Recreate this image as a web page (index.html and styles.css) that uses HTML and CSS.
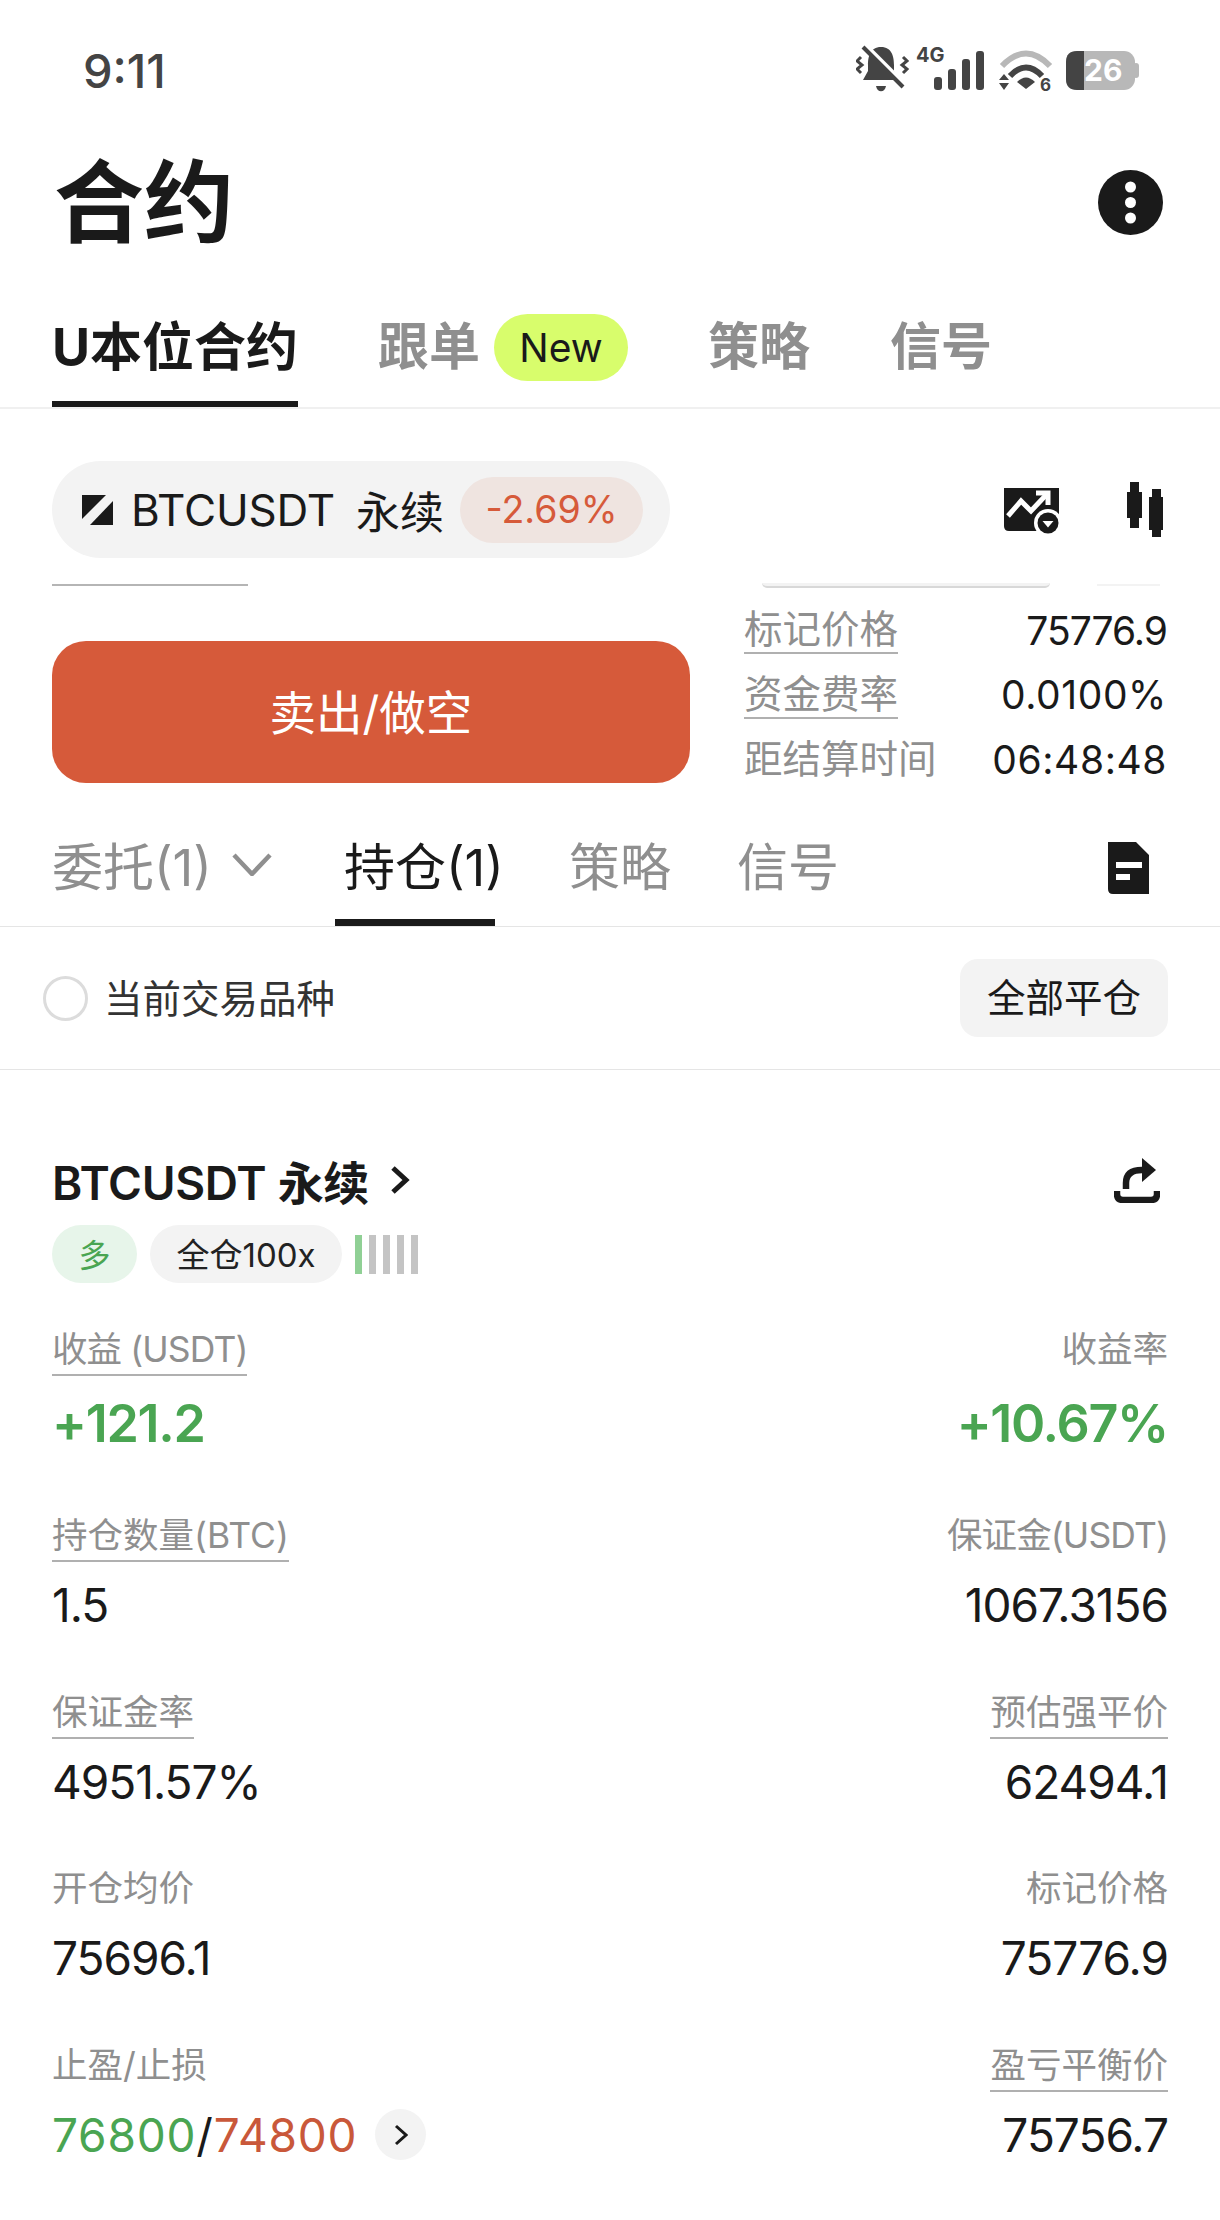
FILE: index.html
```html
<!DOCTYPE html>
<html lang="zh-CN">
<head>
<meta charset="utf-8">
<title>合约</title>
<link rel="stylesheet" href="styles.css">
</head>
<body>
<main class="screen">
  <div class="status">
    <span class="time">9:11</span>
    <svg class="status-icons" viewBox="0 -10 284 67" width="284" height="67">
      <path class="d" d="M25 2C14 2 12 12 12 20V26L7 35H43L38 26V20C38 12 36 2 25 2Z"/>
      <path class="d" d="M20 41H30C29 48 21 48 20 41Z"/>
      <path class="wave" d="M5 12L1 16L6 20L1 24L5 28M47 12L51 16L46 20L51 24L47 28"/>
      <path class="cut" d="M11 2L51 42"/>
      <path class="slash" d="M7 2L47 42"/>
      <text class="s4g" x="60" y="17">4G</text>
      <rect class="d" x="78" y="32" width="8" height="13" rx="3"/>
      <rect class="d" x="92" y="24" width="8" height="21" rx="3"/>
      <rect class="d" x="106" y="14" width="8" height="31" rx="3"/>
      <rect class="d" x="120" y="6" width="8" height="39" rx="3"/>
      <path class="arc-l" d="M146 21Q170 -4 194 21"/>
      <path class="arc-d" d="M154 31Q170 14 186 31"/>
      <path class="d" d="M161 37Q170 28 179 37L170 44Z"/>
      <path class="d" d="M148 29L153 35H143ZM143 38H153L148 45Z"/>
      <text class="s6" x="184" y="46">6</text>
      <rect class="l" x="210" y="6" width="69" height="39" rx="11"/>
      <rect class="l" x="277" y="18" width="6" height="15" rx="3"/>
      <path class="d" d="M228 6H221Q210 6 210 17V34Q210 45 221 45H228Z"/>
      <text class="s26" x="228" y="36">26</text>
    </svg>
  </div>

  <header class="head">
    <h1 class="title">合约</h1>
    <svg class="more" viewBox="0 0 65 65" width="65" height="65">
      <circle class="k" cx="32.5" cy="32.5" r="32.5"/>
      <circle class="w" cx="32.5" cy="17" r="5.5"/>
      <circle class="w" cx="32.5" cy="32.5" r="5.5"/>
      <circle class="w" cx="32.5" cy="48" r="5.5"/>
    </svg>
  </header>

  <nav class="tabs">
    <div class="tab active">U本位合约</div>
    <div class="tab">跟单<span class="new">New</span></div>
    <div class="tab">策略</div>
    <div class="tab">信号</div>
  </nav>

  <section class="instrument">
    <div class="pill">
      <svg class="logo" viewBox="0 0 31 30" width="31" height="30">
        <path class="k" d="M0 0H24L0 24Z"/>
        <path class="k" d="M31 6V30H8Z"/>
      </svg>
      <span class="sym">BTCUSDT</span>
      <span class="perp">永续</span>
      <span class="chg">-2.69%</span>
    </div>
    <svg class="chart-ico" viewBox="0 0 58 49" width="58" height="49">
      <path class="k" d="M0 0H55V38Q55 43 50 43H5Q0 43 0 38Z"/>
      <path class="ws" d="M4 28L17 13L27 23L43 6"/>
      <path class="ws" d="M32 5H44V17"/>
      <circle class="w" cx="44" cy="35" r="14"/>
      <circle class="k" cx="44" cy="35" r="10.5"/>
      <path class="w" d="M38.500 33H49.500L44 39.500Z"/>
    </svg>
    <svg class="candle" viewBox="0 0 36 55" width="36" height="55">
      <path class="k" d="M3 0H12V10H15V36H12V46H3V36H0V10H3Z"/>
      <path class="k" d="M25 7H34V15H36V48H34V55H25V48H22V15H25Z"/>
    </svg>
  </section>

  <div class="clip">
    <span class="clip-a"></span>
    <span class="clip-b"></span>
    <span class="clip-c"></span>
  </div>

  <section class="trade">
    <button class="sell">卖出/做空</button>
    <div class="stats">
      <div class="stat"><span class="stat-k ul">标记价格</span><span class="stat-v">75776.9</span></div>
      <div class="stat"><span class="stat-k ul">资金费率</span><span class="stat-v wide">0.0100%</span></div>
      <div class="stat"><span class="stat-k">距结算时间</span><span class="stat-v wide">06:48:48</span></div>
    </div>
  </section>

  <nav class="subtabs">
    <div class="sub">委托(1)<svg class="chev" viewBox="0 0 40 23" width="40" height="23"><path class="gs" d="M2 2L20 21L38 2"/></svg></div>
    <div class="sub on">持仓(1)</div>
    <div class="sub s3">策略</div>
    <div class="sub s4">信号</div>
    <svg class="doc" viewBox="0 0 41 52" width="41" height="52">
      <path class="k" fill-rule="evenodd" d="M0 0H28L41 13V52H5Q0 52 0 47ZM8 20V26H34V20ZM8 32V38H22V32Z"/>
    </svg>
  </nav>

  <section class="filter">
    <span class="radio"></span>
    <span class="filter-t">当前交易品种</span>
    <button class="closeall">全部平仓</button>
  </section>

  <section class="pos">
    <div class="pos-head">
      <div class="pos-name">BTCUSDT 永续
        <svg class="pos-chev" viewBox="0 0 20 30" width="20" height="30"><path class="ks" d="M3 3L16 15L3 27"/></svg>
      </div>
      <svg class="share" viewBox="0 0 46 45" width="46" height="45">
        <path class="ks6" d="M12 31V25Q12 12 28 12"/>
        <path class="k" d="M28 0L42 12L28 24Z"/>
        <path class="ks6" d="M3 33V36Q3 42 9 42H37Q43 42 43 36V33"/>
      </svg>
    </div>
    <div class="chips">
      <span class="chip long">多</span>
      <span class="chip lev">全仓100x</span>
      <span class="bars"><i class="bar g"></i><i class="bar"></i><i class="bar"></i><i class="bar"></i><i class="bar"></i></span>
    </div>

    <div class="metrics">
      <div class="row hero">
        <div class="m"><span class="lab ul tight">收益 (USDT)</span><div class="val up big">+121.2</div></div>
        <div class="m r"><span class="lab">收益率</span><div class="val up big">+10.67%</div></div>
      </div>
      <div class="row">
        <div class="m"><span class="lab ul">持仓数量(BTC)</span><div class="val">1.5</div></div>
        <div class="m r"><span class="lab tight">保证金(USDT)</span><div class="val">1067.3156</div></div>
      </div>
      <div class="row">
        <div class="m"><span class="lab ul">保证金率</span><div class="val">4951.57%</div></div>
        <div class="m r"><span class="lab ul">预估强平价</span><div class="val">62494.1</div></div>
      </div>
      <div class="row">
        <div class="m"><span class="lab">开仓均价</span><div class="val">75696.1</div></div>
        <div class="m r"><span class="lab">标记价格</span><div class="val">75776.9</div></div>
      </div>
      <div class="row">
        <div class="m"><span class="lab">止盈/止损</span>
          <div class="val tp"><span class="up">76800</span>/<span class="dn">74800</span>
            <span class="go"><svg viewBox="0 0 14 22" width="14" height="22"><path class="ks3" d="M2 2L12 11L2 20"/></svg></span>
          </div>
        </div>
        <div class="m r"><span class="lab ul">盈亏平衡价</span><div class="val">75756.7</div></div>
      </div>
    </div>
  </section>
</main>
</body>
</html>
```
FILE: styles.css
```css
* { box-sizing: border-box; }
html, body { margin: 0; padding: 0; background: #fff; }
body {
  font-family: Inter, "Noto Sans CJK SC", sans-serif;
  color: #1a1a1a;
}
.screen { width: 1220px; height: 2220px; overflow: hidden; }

/* svg paint helpers */
.k { fill: #1a1a1a; }
.w { fill: #fff; }
.d { fill: #444; }
.l { fill: #b8b8b8; }
.ws { fill: none; stroke: #fff; stroke-width: 5; }
.ks { fill: none; stroke: #1a1a1a; stroke-width: 5; }
.ks3 { fill: none; stroke: #1a1a1a; stroke-width: 3; }
.ks6 { fill: none; stroke: #1a1a1a; stroke-width: 6.500; }
.gs { fill: none; stroke: #8f8f8f; stroke-width: 4.500; }
.wave { fill: none; stroke: #444; stroke-width: 3; }
.cut { fill: none; stroke: #fff; stroke-width: 5; }
.slash { fill: none; stroke: #444; stroke-width: 4; }
.arc-l { fill: none; stroke: #b8b8b8; stroke-width: 6; }
.arc-d { fill: none; stroke: #444; stroke-width: 6; }
.s4g { font-size: 20px; font-weight: 700; fill: #444; }
.s6 { font-size: 17px; font-weight: 700; fill: #444; }
.s26 { font-size: 30px; font-weight: 700; fill: #fff; }

/* status bar */
.status {
  height: 140px;
  display: flex;
  align-items: center;
  justify-content: space-between;
  padding: 0 80px 0 83px;
}
.time { font-size: 47px; font-weight: 500; color: #444; }
.status-icons { margin-top: -3px; }

/* page title */
.head {
  height: 125px;
  display: flex;
  align-items: center;
  justify-content: space-between;
  padding: 0 57px 0 54px;
}
.title { margin: 0; font-size: 90px; line-height: 125px; font-weight: 700; color: #1a1a1a; }

/* top tabs */
.tabs {
  display: flex;
  gap: 80px;
  padding: 48px 0 0 52px;
  border-bottom: 2px solid #f0f0f0;
  height: 144px;
}
.tab {
  display: flex;
  align-items: center;
  height: 94px;
  padding-bottom: 34px;
  font-size: 51px;
  font-weight: 700;
  color: #8f8f8f;
  white-space: nowrap;
}
.tab.active { color: #1a1a1a; border-bottom: 6px solid #1a1a1a; padding-bottom: 28px; width: 246px; font-size: 52px; }
.new {
  display: inline-flex;
  align-items: center;
  justify-content: center;
  width: 134px;
  height: 67px;
  margin: 8px 0 0 14px;
  border-radius: 34px;
  background: #d8fd6c;
  color: #1a1a1a;
  font-size: 39px;
  font-weight: 400;
}

/* instrument row */
.instrument {
  display: flex;
  align-items: flex-start;
  margin-top: 52px;
  padding-left: 52px;
}
.pill {
  display: flex;
  align-items: center;
  width: 618px;
  height: 97px;
  border-radius: 49px;
  background: #f3f3f3;
  padding-left: 30px;
}
.logo { margin-right: 18px; }
.sym { font-size: 44px; margin-right: 21px; letter-spacing: -0.2px; }
.perp { font-size: 44px; width: 90px; margin-right: 14px; }
.chg {
  display: flex;
  align-items: center;
  justify-content: center;
  width: 183px;
  height: 66px;
  border-radius: 33px;
  background: #efe4e0;
  color: #d65a3a;
  font-size: 37.500px;
}
.chart-ico { margin: 27px 0 0 334px; }
.candle { margin: 21px 0 0 65px; }

/* clipped row behind the sticky header */
.clip {
  display: flex;
  align-items: flex-start;
  height: 6px;
  margin-top: 25px;
  padding-left: 52px;
}
.clip-a { width: 196px; height: 2px; margin-top: 1px; background: #b5b5b5; }
.clip-b {
  width: 288px;
  height: 5px;
  margin-left: 514px;
  border-radius: 0 0 12px 12px;
  background: #f3f3f3;
  border-bottom: 2px solid #d8d8d8;
}
.clip-c { width: 63px; height: 2px; margin: 1px 0 0 47px; background: #f3f3f3; }

/* sell button + stats */
.trade {
  display: flex;
  gap: 54px;
  height: 194px;
  padding: 0 53px 0 52px;
}
.sell {
  flex: none;
  width: 638px;
  height: 142px;
  margin-top: 52px;
  padding: 0 0 5px;
  border: 0;
  border-radius: 34px;
  background: #d65a3a;
  color: #fff;
  font-family: inherit;
  font-size: 46.500px;
}
.stats { flex: 1; padding-top: 9px; }
.stat {
  display: flex;
  align-items: center;
  justify-content: space-between;
  height: 64.500px;
}
.stat-k { font-size: 38.500px; line-height: 46px; color: #8f8f8f; }
.stat-v { font-size: 39px; color: #1a1a1a; letter-spacing: -1px; }
.stat-v.wide { letter-spacing: 0.600px; }
.ul { border-bottom: 2px solid #b0b0b0; }

/* sub tabs */
.subtabs {
  display: flex;
  align-items: flex-start;
  height: 144px;
  padding: 51px 71px 0 52px;
  border-bottom: 1px solid #e5e5e5;
}
.sub {
  display: flex;
  align-items: center;
  height: 92px;
  padding-bottom: 32px;
  font-size: 51px;
  color: #8f8f8f;
  white-space: nowrap;
}
.chev { margin-left: 20px; }
.sub.on {
  width: 160px;
  margin-left: 63px;
  padding: 0 0 25px 9px;
  color: #1a1a1a;
  border-bottom: 7px solid #1a1a1a;
}
.sub.s3 { margin-left: 74px; }
.sub.s4 { margin-left: 66px; }
.doc { margin: 8px 0 0 auto; }

/* filter row */
.filter {
  display: flex;
  align-items: center;
  height: 143px;
  padding: 0 52px 0 43px;
  border-bottom: 1px solid #e5e5e5;
}
.radio {
  width: 45px;
  height: 45px;
  border: 3px solid #dcdcdc;
  border-radius: 50%;
  margin-right: 16px;
}
.filter-t { font-size: 38.500px; color: #333; margin-bottom: 5px; }
.closeall {
  width: 208px;
  height: 78px;
  margin-left: auto;
  padding: 0 0 6px;
  border: 0;
  border-radius: 18px;
  background: #f3f3f3;
  color: #1a1a1a;
  font-family: inherit;
  font-size: 38.500px;
}

/* position card */
.pos { padding: 80px 52px 0 52px; }
.pos-head {
  display: flex;
  align-items: center;
  justify-content: space-between;
  height: 60px;
  padding-right: 8px;
}
.pos-name {
  display: flex;
  align-items: center;
  gap: 21px;
  font-size: 46px;
  font-weight: 600;
  letter-spacing: -0.3px;
}
.chips { display: flex; align-items: center; margin-top: 15px; height: 58px; }
.chip {
  display: flex;
  align-items: center;
  justify-content: center;
  height: 58px;
  padding-bottom: 2px;
  border-radius: 29px;
}
.long { width: 85px; background: #e7f5ea; color: #4aa552; font-size: 32px; }
.lev { width: 192px; margin-left: 13px; background: #f3f3f3; font-size: 33px; color: #222; }
.bars { display: flex; gap: 7px; margin-left: 13px; }
.bar { width: 7px; height: 39px; background: #c4c4c4; }
.bar.g { background: #90d095; }

/* metrics grid */
.metrics { display: flex; flex-direction: column; margin-top: 42px; }
.row { display: flex; justify-content: space-between; padding-bottom: 61.500px; }
.row.hero { padding-bottom: 57px; }
.m { display: flex; flex-direction: column; align-items: flex-start; }
.m.r { align-items: flex-end; }
.lab {
  height: 51px;
  padding: 3px 0 2px;
  font-size: 35.500px;
  line-height: 44px;
  color: #8f8f8f;
  white-space: nowrap;
  border-bottom: 2px solid transparent;
}
.lab.ul { border-bottom-color: #b0b0b0; }
.lab.tight { letter-spacing: -0.900px; }
.val { margin-top: 22px; font-size: 46px; line-height: 42px; letter-spacing: -1px; white-space: nowrap; color: #1a1a1a; }
.val.big { font-size: 52px; line-height: 60px; margin-top: 18px; font-weight: 600; letter-spacing: -1.300px; color: #4aa552; }
.up { color: #4aa552; }
.dn { color: #c9583a; }
.tp { display: flex; align-items: center; letter-spacing: 0.800px; }
.go {
  display: flex;
  align-items: center;
  justify-content: center;
  width: 51px;
  height: 51px;
  margin: -5px 0 -5px 18px;
  border-radius: 50%;
  background: #f3f3f3;
}
```
